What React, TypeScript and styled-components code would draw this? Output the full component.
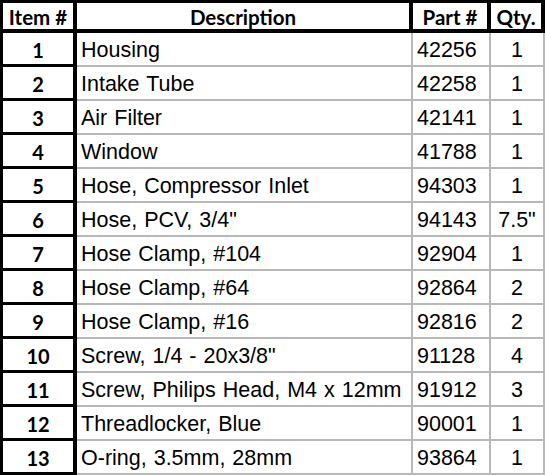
import React from "react";
import styled, { createGlobalStyle } from "styled-components";

const GlobalStyle = createGlobalStyle`
  html, body {
    margin: 0;
    padding: 0;
    background: #fff;
  }
  * {
    box-sizing: border-box;
  }
`;

type Part = { item: number; desc: string; part: string; qty: string };

const parts: Part[] = [
  { item: 1, desc: "Housing", part: "42256", qty: "1" },
  { item: 2, desc: "Intake Tube", part: "42258", qty: "1" },
  { item: 3, desc: "Air Filter", part: "42141", qty: "1" },
  { item: 4, desc: "Window", part: "41788", qty: "1" },
  { item: 5, desc: "Hose, Compressor Inlet", part: "94303", qty: "1" },
  { item: 6, desc: 'Hose, PCV, 3/4"', part: "94143", qty: '7.5"' },
  { item: 7, desc: "Hose Clamp, #104", part: "92904", qty: "1" },
  { item: 8, desc: "Hose Clamp, #64", part: "92864", qty: "2" },
  { item: 9, desc: "Hose Clamp, #16", part: "92816", qty: "2" },
  { item: 10, desc: 'Screw, 1/4 - 20x3/8"', part: "91128", qty: "4" },
  { item: 11, desc: "Screw, Philips Head, M4 x 12mm", part: "91912", qty: "3" },
  { item: 12, desc: "Threadlocker, Blue", part: "90001", qty: "1" },
  { item: 13, desc: "O-ring, 3.5mm, 28mm", part: "93864", qty: "1" },
];

export default function App() {
  return (
    <>
      <GlobalStyle />
      <Sheet>
        <HeadCell first>Item #</HeadCell>
        <HeadCell>Description</HeadCell>
        <HeadCell>Part #</HeadCell>
        <HeadCell>Qty.</HeadCell>

        {parts.map((p) => (
          <React.Fragment key={p.item}>
            <ItemCell>{p.item}</ItemCell>
            <Cell>{p.desc}</Cell>
            <Cell>{p.part}</Cell>
            <Cell center>{p.qty}</Cell>
          </React.Fragment>
        ))}
      </Sheet>
    </>
  );
}

const Sheet = styled.div`
  display: grid;
  grid-template-columns: 77px 336px 78px 54px;
  grid-template-rows: 33px repeat(13, 34px);
  width: 545px;
  background: #fff;
`;

const HeadCell = styled.div<{ first?: boolean }>`
  display: flex;
  align-items: center;
  justify-content: center;
  padding-top: 2px;
  border-top: 3px solid #000;
  border-bottom: 4px solid #000;
  border-right: 4px solid #000;
  border-left: ${(p) => (p.first ? "3px solid #000" : "none")};
  font-family: Lato, "Open Sans", sans-serif;
  font-weight: 700;
  font-size: 20.5px;
  color: #000;
  white-space: nowrap;
`;

const ItemCell = styled.div`
  display: flex;
  align-items: center;
  justify-content: center;
  padding-top: 2px;
  border-left: 3px solid #000;
  border-right: 4px solid #000;
  border-bottom: 3px solid #000;
  font-family: Lato, "Open Sans", sans-serif;
  font-weight: 700;
  font-size: 20px;
  color: #000;
`;

const Cell = styled.div<{ center?: boolean }>`
  display: flex;
  align-items: center;
  justify-content: ${(p) => (p.center ? "center" : "flex-start")};
  padding: 2px ${(p) => (p.center ? "0" : "4px")} 0;
  border-right: 2px solid #b8b8b8;
  border-bottom: 2px solid #b8b8b8;
  font-family: "Liberation Sans", Arial, sans-serif;
  font-size: 21.5px;
  word-spacing: 1px;
  color: #000;
  white-space: nowrap;
`;
